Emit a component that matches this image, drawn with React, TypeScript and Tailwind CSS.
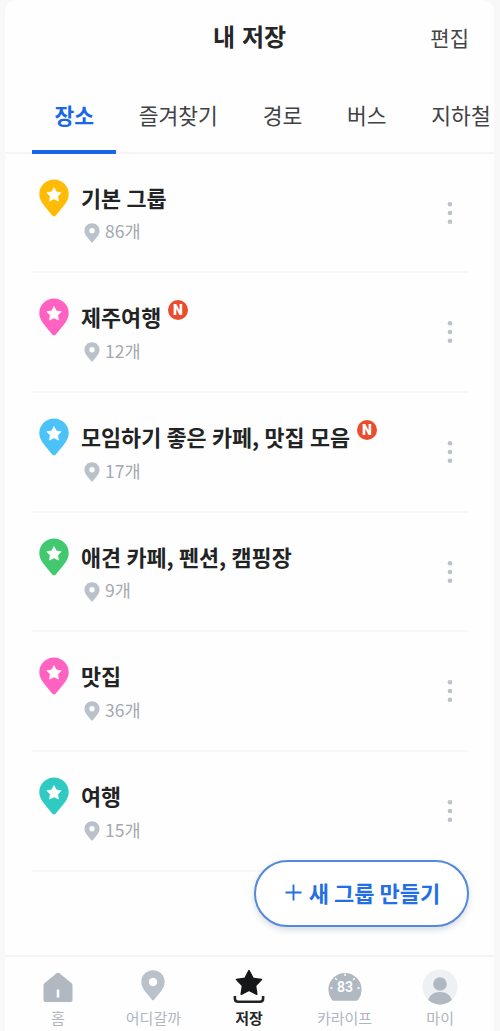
/**
 * Saved places page
 *
 * Lists the user's saved place groups with category tabs,
 * a button for new groups and the bottom navigation.
 */

import { useState } from "react";
import type { ReactNode } from "react";

interface PlaceGroup {
  id: number;
  name: string;
  count: number;
  color: string;
  isNew?: boolean;
}

const groups: PlaceGroup[] = [
  { id: 1, name: "기본 그룹", count: 86, color: "#ffbb06" },
  { id: 2, name: "제주여행", count: 12, color: "#ff62c0", isNew: true },
  { id: 3, name: "모임하기 좋은 카페, 맛집 모음", count: 17, color: "#4bc3f8", isNew: true },
  { id: 4, name: "애견 카페, 펜션, 캠핑장", count: 9, color: "#42c96f" },
  { id: 5, name: "맛집", count: 36, color: "#ff62c0" },
  { id: 6, name: "여행", count: 15, color: "#2fcbc3" },
];

const tabs = ["장소", "즐겨찾기", "경로", "버스", "지하철"];

const STAR = "M0 -1 L.31 -.41 L.96 -.31 L.5 .16 L.6 .82 L0 .52 L-.6 .82 L-.5 .16 L-.96 -.31 L-.31 -.41 Z";

function GroupPin({ color }: { color: string }) {
  return (
    <svg className="h-[38px] w-[30px] shrink-0" viewBox="0 0 30 38" fill="none">
      <path
        d="M15 .5C6.800 .5 .3 7 .3 15c0 5 2.400 8.600 5.300 12.200l7.600 9.200c1 1.200 2.600 1.200 3.600 0l7.600-9.200c2.900-3.600 5.300-7.200 5.300-12.200C29.700 7 23.200 .5 15 .5Z"
        fill={color}
      />
      <path d={STAR} transform="translate(15 16) scale(7.4)" fill="#fff" stroke="#fff" strokeWidth=".1" strokeLinejoin="round" />
    </svg>
  );
}

function PlacePin({ className }: { className: string }) {
  return (
    <svg className={className} viewBox="0 0 24 31" fill="none">
      <path
        d="M12 .3C5.4 .3 .3 5.4 .3 12c0 4 1.9 7 4.3 9.9l6.3 7.8c.6.8 1.6.8 2.2 0l6.3-7.8c2.4-2.9 4.3-5.9 4.3-9.9C23.7 5.4 18.6.3 12 .3Zm0 7.5a4.2 4.2 0 1 1 0 8.4 4.2 4.2 0 0 1 0-8.4Z"
        fill="#bac1ca"
        fillRule="evenodd"
      />
    </svg>
  );
}

function MoreIcon() {
  return (
    <svg className="h-[24px] w-[6px]" viewBox="0 0 6 24" fill="#bcc1ca">
      <circle cx="3" cy="3.3" r="2.3" />
      <circle cx="3" cy="12" r="2.3" />
      <circle cx="3" cy="20.7" r="2.3" />
    </svg>
  );
}

function NewBadge() {
  return (
    <span className="mb-[13px] ml-[7px] flex size-[19.5px] items-center justify-center rounded-full bg-[#ea4d2c] font-[Roboto,sans-serif] text-[14px] leading-none font-black text-white">
      N
    </span>
  );
}

function GroupRow({ group }: { group: PlaceGroup }) {
  return (
    <li className="flex h-[119.7px] border-b-2 border-[#f6f7f8] pt-[25px] pl-[7px]">
      <GroupPin color={group.color} />
      <div className="ml-[12px] flex-1">
        <div className="flex h-[37px] items-center">
          <h2 className="text-[21.8px] leading-[37px] font-bold [word-spacing:0.4px] whitespace-nowrap text-[#222324]">{group.name}</h2>
          {group.isNew && <NewBadge />}
        </div>
        <p className="mt-[3px] flex h-[26px] items-center gap-[5px] pl-[3px] text-[17.5px] text-[#a4a9b0]">
          <PlacePin className="mt-[2px] h-[20px] w-[16px]" />
          {group.count}개
        </p>
      </div>
      <button className="mt-[22px] mr-[15px] h-[24px] w-[6px]" aria-label="더보기">
        <MoreIcon />
      </button>
    </li>
  );
}

function HomeIcon() {
  return (
    <svg className="h-[36px] w-[36px]" viewBox="0 0 36 36" fill="none">
      <path d="M16.600 4.300c.9-.8 1.900-.8 2.800 0l11.900 9.600c.8.7 1.200 1.400 1.200 2.500v14.300c0 1.600-.8 2.300-2.300 2.300H5.800c-1.500 0-2.300-.7-2.300-2.300V16.400c0-1.100.4-1.800 1.200-2.500Z" fill="#b0b8c2" />
      <path d="M18 20.500v8" stroke="#fff" strokeWidth="2.600" />
    </svg>
  );
}

function SavedIcon() {
  return (
    <svg className="h-[36px] w-[36px]" viewBox="0 0 36 36" fill="none">
      <path d={STAR} transform="translate(18 14.6) scale(13)" fill="#151719" stroke="#151719" strokeWidth=".12" strokeLinejoin="round" />
      <path d="M3.900 27v2.500c0 2.200 1 3.200 3.200 3.200h21.800c2.200 0 3.200-1 3.200-3.200V27" stroke="#222426" strokeWidth="2.600" />
    </svg>
  );
}

function CarLifeIcon() {
  return (
    <svg className="h-[36px] w-[36px]" viewBox="0 0 36 36" fill="none">
      <path d="M7.500 31.800c-1.400 0-2.300-.5-3-1.600A16.600 16.600 0 1 1 31.500 30.200c-.7 1.100-1.600 1.600-3 1.600Z" fill="#b0b8c2" />
      <path d="M18 4.500v2.600M8.300 9.300l1.600 1.600M27.700 9.300l-1.600 1.600M3.300 19h2.200M32.700 19h-2.200" stroke="#fff" strokeWidth="1.400" />
      <text x="18" y="22.500" textAnchor="middle" fill="#fff" fontFamily="Roboto, sans-serif" fontSize="14" fontWeight="600">
        83
      </text>
    </svg>
  );
}

function ProfileIcon() {
  return (
    <svg className="h-[36px] w-[36px]" viewBox="0 0 36 36" fill="none">
      <circle cx="18" cy="18" r="17.500" fill="#eff0f4" />
      <circle cx="18" cy="15" r="6.800" fill="#b0b8c2" />
      <path d="M6.300 31C7.300 26.500 11.800 23 18 23s10.700 3.500 11.700 8A17.500 17.500 0 0 1 6.300 31Z" fill="#b0b8c2" />
    </svg>
  );
}

const navItems: { label: string; icon: ReactNode; active?: boolean }[] = [
  { label: "홈", icon: <HomeIcon /> },
  { label: "어디갈까", icon: <PlacePin className="mb-[4px] h-[31px] w-[24px]" /> },
  { label: "저장", icon: <SavedIcon />, active: true },
  { label: "카라이프", icon: <CarLifeIcon /> },
  { label: "마이", icon: <ProfileIcon /> },
];

export default function App() {
  const [activeTab, setActiveTab] = useState("장소");

  return (
    <div className="h-[1031px] w-[500px] overflow-hidden bg-[#f8f8f8] pr-[6px] pl-[5px] font-['Noto_Sans_CJK_KR',sans-serif]">
      <div className="relative flex h-full flex-col rounded-t-[12px] bg-[#fefefe]">
        {/* Header */}
        <header className="grid h-[78px] shrink-0 grid-cols-[1fr_auto_1fr] items-start px-[25px] pt-[19px] text-[#252627]">
          <h1 className="col-start-2 text-[24px] leading-[34px] font-bold [word-spacing:1.5px]">내 저장</h1>
          <button className="justify-self-end text-[21px] leading-[36px] text-[#444547]">편집</button>
        </header>

        {/* Category tabs */}
        <nav className="flex h-[76px] shrink-0 overflow-hidden pl-[27px] shadow-[inset_0_-2px_0_#f4f5f6]">
          {tabs.map((tab) => (
            <button
              key={tab}
              onClick={() => setActiveTab(tab)}
              className={
                activeTab === tab
                  ? "h-[76px] shrink-0 border-b-4 border-[#1967e6] px-[22.4px] pt-[3px] text-[21.5px] font-bold text-[#1967e6]"
                  : "h-[76px] shrink-0 border-b-4 border-transparent px-[22.4px] pt-[3px] text-[21.5px] text-[#414244]"
              }
            >
              {tab}
            </button>
          ))}
        </nav>

        {/* Group list */}
        <ul className="mt-[-0.5px] mr-[26px] ml-[27px] flex-1">
          {groups.map((group) => (
            <GroupRow key={group.id} group={group} />
          ))}
        </ul>

        <button className="absolute top-[860px] right-[25px] flex h-[67px] w-[215px] items-center justify-center gap-[7px] rounded-full border-2 border-[#5588dc] bg-white pb-[2px] pl-[2px] text-[22px] font-bold text-[#236fe3] shadow-[0_3px_6px_rgba(40,60,90,0.18)]">
          <svg className="size-[17px]" viewBox="0 0 18 18" stroke="currentColor" strokeWidth="2">
            <path d="M9 .5v17M.5 9h17" />
          </svg>
          새 그룹 만들기
        </button>

        {/* Bottom navigation */}
        <footer className="flex h-[76px] shrink-0 border-t-2 border-[#f3f4f5] pr-[6px] pl-[5px]">
          {navItems.map((item) => (
            <button key={item.label} className="flex flex-1 flex-col items-center pt-[12px]">
              <span className="flex h-[36px] items-center justify-center">{item.icon}</span>
              <span className={item.active ? "mt-[3px] text-[15px] leading-[20px] font-bold text-[#252729]" : "mt-[3px] text-[15px] leading-[20px] text-[#b0b6be]"}>
                {item.label}
              </span>
            </button>
          ))}
        </footer>
      </div>
    </div>
  );
}
